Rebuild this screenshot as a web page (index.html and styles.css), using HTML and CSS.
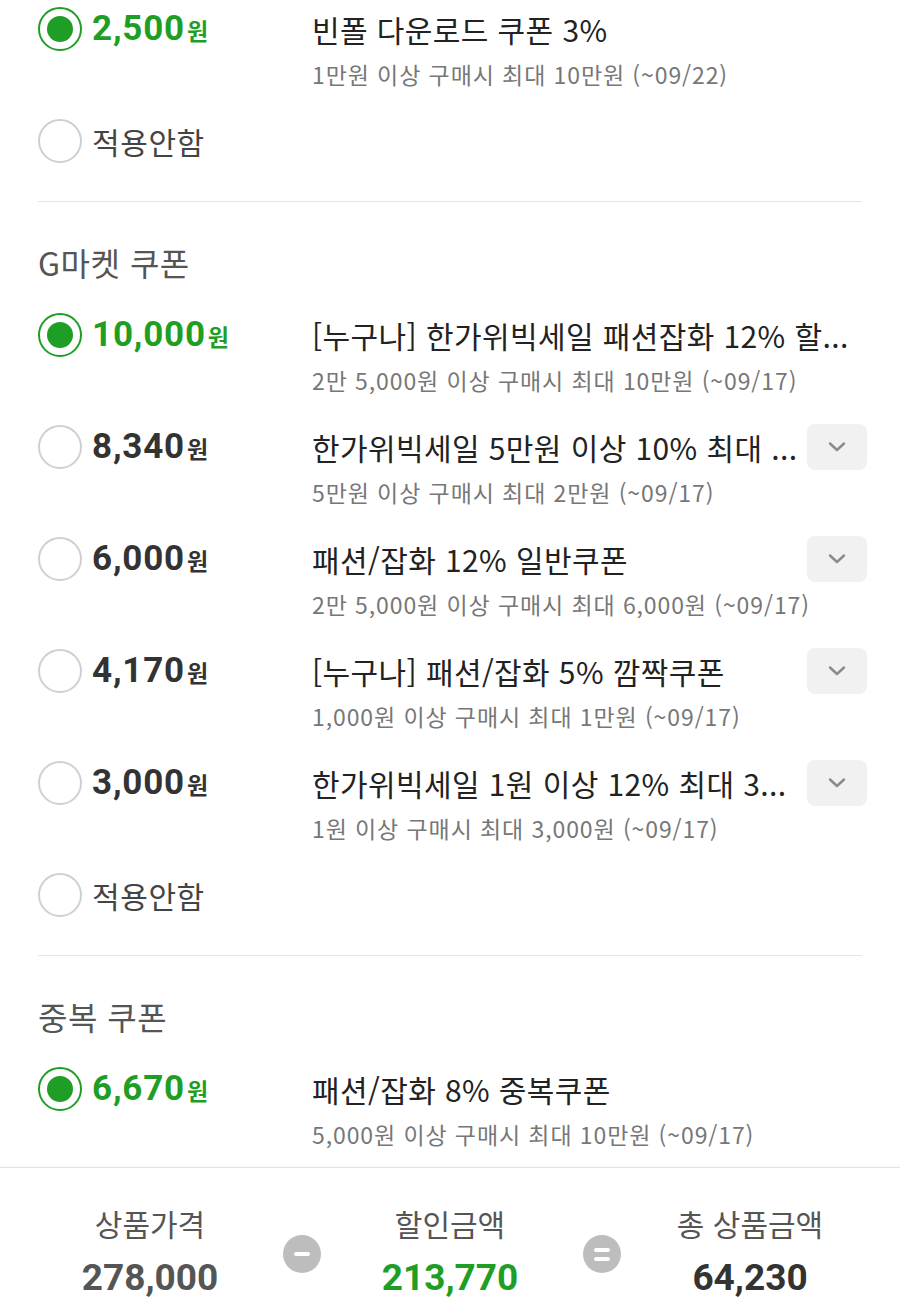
FILE: index.html
```html
<!DOCTYPE html>
<html lang="ko">
<head>
    <meta charset="UTF-8">
    <meta name="viewport" content="width=device-width, initial-scale=1.0">
    <title>쿠폰 적용</title>
    <link rel="stylesheet" href="styles.css">
</head>
<body>
    <div class="page">
        <div class="coupon checked">
            <div class="pick"><span class="radio"></span><span class="amount">2,500<small>원</small></span></div>
            <div class="info">
                <div class="title">빈폴 다운로드 쿠폰 3%</div>
                <div class="cond">1만원 이상 구매시 최대 10만원 (~09/22)</div>
            </div>
        </div>
        <div class="none">
            <div class="pick"><span class="radio"></span><span class="none-label">적용안함</span></div>
        </div>

        <div class="divider"></div>

        <h3 class="section">G마켓 쿠폰</h3>
        <div class="coupon checked">
            <div class="pick"><span class="radio"></span><span class="amount">10,000<small>원</small></span></div>
            <div class="info">
                <div class="title">[누구나] 한가위빅세일 패션잡화 12% 할...</div>
                <div class="cond">2만 5,000원 이상 구매시 최대 10만원 (~09/17)</div>
            </div>
        </div>
        <div class="coupon">
            <div class="pick"><span class="radio"></span><span class="amount">8,340<small>원</small></span></div>
            <div class="info">
                <div class="title">한가위빅세일 5만원 이상 10% 최대 ...</div>
                <div class="cond">5만원 이상 구매시 최대 2만원 (~09/17)</div>
            </div>
            <button class="more"><svg width="18" height="10" viewBox="0 0 18 10"><path d="M2 1.5 L9 8 L16 1.5" fill="none" stroke="#8a8a8a" stroke-width="2.4" stroke-linecap="round" stroke-linejoin="round"/></svg></button>
        </div>
        <div class="coupon">
            <div class="pick"><span class="radio"></span><span class="amount">6,000<small>원</small></span></div>
            <div class="info">
                <div class="title">패션/잡화 12% 일반쿠폰</div>
                <div class="cond">2만 5,000원 이상 구매시 최대 6,000원 (~09/17)</div>
            </div>
            <button class="more"><svg width="18" height="10" viewBox="0 0 18 10"><path d="M2 1.5 L9 8 L16 1.5" fill="none" stroke="#8a8a8a" stroke-width="2.4" stroke-linecap="round" stroke-linejoin="round"/></svg></button>
        </div>
        <div class="coupon">
            <div class="pick"><span class="radio"></span><span class="amount">4,170<small>원</small></span></div>
            <div class="info">
                <div class="title">[누구나] 패션/잡화 5% 깜짝쿠폰</div>
                <div class="cond">1,000원 이상 구매시 최대 1만원 (~09/17)</div>
            </div>
            <button class="more"><svg width="18" height="10" viewBox="0 0 18 10"><path d="M2 1.5 L9 8 L16 1.5" fill="none" stroke="#8a8a8a" stroke-width="2.4" stroke-linecap="round" stroke-linejoin="round"/></svg></button>
        </div>
        <div class="coupon">
            <div class="pick"><span class="radio"></span><span class="amount">3,000<small>원</small></span></div>
            <div class="info">
                <div class="title">한가위빅세일 1원 이상 12% 최대 3...</div>
                <div class="cond">1원 이상 구매시 최대 3,000원 (~09/17)</div>
            </div>
            <button class="more"><svg width="18" height="10" viewBox="0 0 18 10"><path d="M2 1.5 L9 8 L16 1.5" fill="none" stroke="#8a8a8a" stroke-width="2.4" stroke-linecap="round" stroke-linejoin="round"/></svg></button>
        </div>
        <div class="none">
            <div class="pick"><span class="radio"></span><span class="none-label">적용안함</span></div>
        </div>

        <div class="divider"></div>

        <h3 class="section">중복 쿠폰</h3>
        <div class="coupon checked last">
            <div class="pick"><span class="radio"></span><span class="amount">6,670<small>원</small></span></div>
            <div class="info">
                <div class="title">패션/잡화 8% 중복쿠폰</div>
                <div class="cond">5,000원 이상 구매시 최대 10만원 (~09/17)</div>
            </div>
        </div>
    </div>

    <div class="summary">
        <div class="sum-col">
            <div class="sum-label">상품가격</div>
            <div class="sum-value">278,000</div>
        </div>
        <div class="op"><span class="bar"></span></div>
        <div class="sum-col">
            <div class="sum-label">할인금액</div>
            <div class="sum-value discount">213,770</div>
        </div>
        <div class="op"><span class="bar"></span><span class="bar"></span></div>
        <div class="sum-col">
            <div class="sum-label">총 상품금액</div>
            <div class="sum-value total">64,230</div>
        </div>
    </div>
</body>
</html>
```

FILE: styles.css
```css
body {
    margin: 0;
    background: #fff;
    font-family: "Noto Sans CJK KR", "Noto Sans", sans-serif;
    color: #222;
}
.page {
    padding: 7px 38px 0 38px;
}
.coupon {
    display: flex;
    align-items: flex-start;
    height: 112px;
}
.coupon.last {
    height: 100px;
}
.pick {
    width: 274px;
    flex: none;
    display: flex;
    align-items: center;
    height: 44px;
}
.radio {
    width: 44px;
    height: 44px;
    border: 2px solid #cfcfcf;
    border-radius: 50%;
    box-sizing: border-box;
    margin: 0 10px 0 0;
    display: flex;
    align-items: center;
    justify-content: center;
    flex: none;
}
.checked .radio {
    border-color: #1f9e25;
}
.checked .radio::after {
    content: "";
    width: 26px;
    height: 26px;
    border-radius: 50%;
    background: #1f9e25;
}
.amount {
    font-family: Roboto, "Noto Sans CJK KR", sans-serif;
    font-weight: 700;
    font-size: 35px;
    letter-spacing: 0.8px;
    color: #333;
    line-height: 44px;
}
.amount small {
    font-family: "Noto Sans CJK KR", sans-serif;
    font-size: 23px;
    font-weight: 700;
    margin-left: 2px;
    letter-spacing: 0;
}
.checked .amount {
    color: #1f9e25;
}
.none-label {
    font-size: 30px;
    letter-spacing: 0.6px;
    color: #444;
    line-height: 44px;
}
.info {
    flex: 1;
    min-width: 0;
}
.title {
    font-size: 30px;
    letter-spacing: 0.4px;
    line-height: 44px;
    color: #222;
    white-space: nowrap;
}
.cond {
    font-size: 23px;
    letter-spacing: 0.9px;
    line-height: 26px;
    margin-top: 10px;
    color: #777;
    white-space: nowrap;
}
.more {
    flex: none;
    width: 60px;
    height: 46px;
    margin: -1px -5px 0 11px;
    border: none;
    border-radius: 8px;
    background: #f1f1f1;
    display: flex;
    align-items: center;
    justify-content: center;
    padding: 0;
}
.none {
    height: 44px;
}
.divider {
    height: 1px;
    background: #e6e6e6;
    margin: 38px 0 40px;
}
.section {
    margin: 0 0 31px;
    font-size: 32px;
    letter-spacing: 0.5px;
    font-weight: 400;
    line-height: 40px;
    color: #555;
}
.summary {
    border-top: 1px solid #e4e4e4;
    box-shadow: 0 -1px 3px rgba(0, 0, 0, 0.04);
    display: grid;
    grid-template-columns: 262px 38px 262px 38px 262px;
    padding: 37px 19px 0;
    height: 97px;
    overflow: hidden;
}
.sum-col {
    text-align: center;
}
.sum-label {
    font-size: 30px;
    line-height: 36px;
    color: #555;
}
.sum-value {
    margin-top: 15px;
    font-family: Roboto, "Noto Sans CJK KR", sans-serif;
    font-weight: 700;
    font-size: 37px;
    line-height: 44px;
    color: #555;
}
.sum-value.discount {
    color: #1f9e25;
}
.sum-value.total {
    color: #333;
}
.op {
    width: 38px;
    height: 38px;
    margin-top: 30px;
    border-radius: 50%;
    background: #bdbdbd;
    display: flex;
    flex-direction: column;
    align-items: center;
    justify-content: center;
    gap: 5px;
    position: relative;
    left: 2px;
}
.bar {
    width: 16px;
    height: 4px;
    border-radius: 2px;
    background: #fff;
}
```
